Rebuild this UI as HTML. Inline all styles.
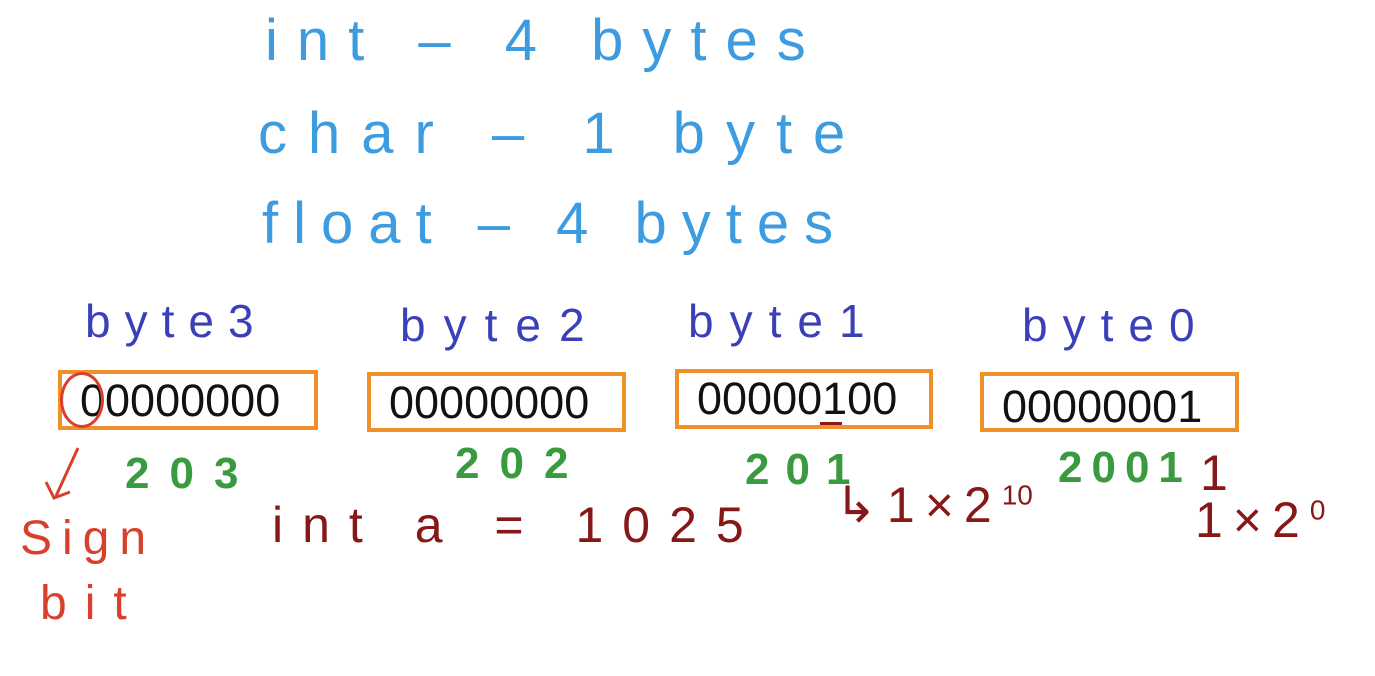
<!DOCTYPE html>
<html><head><meta charset="utf-8"><style>
html,body{margin:0;padding:0;background:#fff;width:1375px;height:676px;overflow:hidden;position:relative;font-family:"Liberation Sans",sans-serif}
.t{position:absolute;white-space:nowrap;line-height:1}
.bl{color:#3d9be0;font-size:58px}
.db{color:#3b3fb8;font-size:46px}
.box{position:absolute;border:4px solid #f0902a;height:60px;box-sizing:border-box;font-size:45px;color:#111;line-height:54px;padding-left:18px}
.gr{color:#3a9a40;font-size:44px;letter-spacing:20px;font-weight:bold}
.rd{color:#d8402c;font-size:48px}
.dr{color:#861818;font-size:50px;letter-spacing:19px}
sup{letter-spacing:0}
</style></head><body>
<div class="t bl" style="left:265px;top:12px;letter-spacing:19px">int – 4 bytes</div>
<div class="t bl" style="left:258px;top:105px;letter-spacing:21px">char – 1 byte</div>
<div class="t bl" style="left:262px;top:195px;letter-spacing:15px">float – 4 bytes</div>

<div class="t db" style="left:85px;top:298px;letter-spacing:14px">byte3</div>
<div class="t db" style="left:400px;top:302px;letter-spacing:18px">byte2</div>
<div class="t db" style="left:688px;top:298px;letter-spacing:16px">byte1</div>
<div class="t db" style="left:1022px;top:302px;letter-spacing:15px">byte0</div>

<div class="box" style="left:58px;top:370px;width:260px">00000000</div>
<div class="box" style="left:367px;top:372px;width:259px">00000000</div>
<div class="box" style="left:675px;top:369px;width:258px;line-height:52px">00000100</div>
<div class="box" style="left:980px;top:372px;width:259px;line-height:62px">00000001</div>
<div style="position:absolute;left:820px;top:422px;width:22px;height:3px;background:#8a1a1a"></div>

<div style="position:absolute;left:60px;top:372px;width:44px;height:56px;border:3px solid #d8402c;border-radius:50%;box-sizing:border-box"></div>
<svg style="position:absolute;left:20px;top:430px" width="70" height="80"><path d="M58 18 L36 66 M26 52 L34 68 L50 62" stroke="#d8402c" stroke-width="3" fill="none"/></svg>

<div class="t gr" style="left:125px;top:452px">203</div>
<div class="t gr" style="left:455px;top:442px">202</div>
<div class="t gr" style="left:745px;top:448px;letter-spacing:16px">201</div>
<div class="t gr" style="left:1058px;top:446px;letter-spacing:9px">2001</div>
<div class="t dr" style="left:1200px;top:448px">1</div>

<div class="t rd" style="left:20px;top:515px;letter-spacing:10px">Sign</div>
<div class="t rd" style="left:40px;top:580px;letter-spacing:18px">bit</div>

<div class="t dr" style="left:272px;top:500px">int a = 1025</div>
<div class="t dr" style="left:835px;top:480px;letter-spacing:10px">↳1×2<sup style="font-size:28px">10</sup></div>
<div class="t dr" style="left:1195px;top:495px;letter-spacing:10px">1×2<sup style="font-size:28px">0</sup></div>
</body></html>
